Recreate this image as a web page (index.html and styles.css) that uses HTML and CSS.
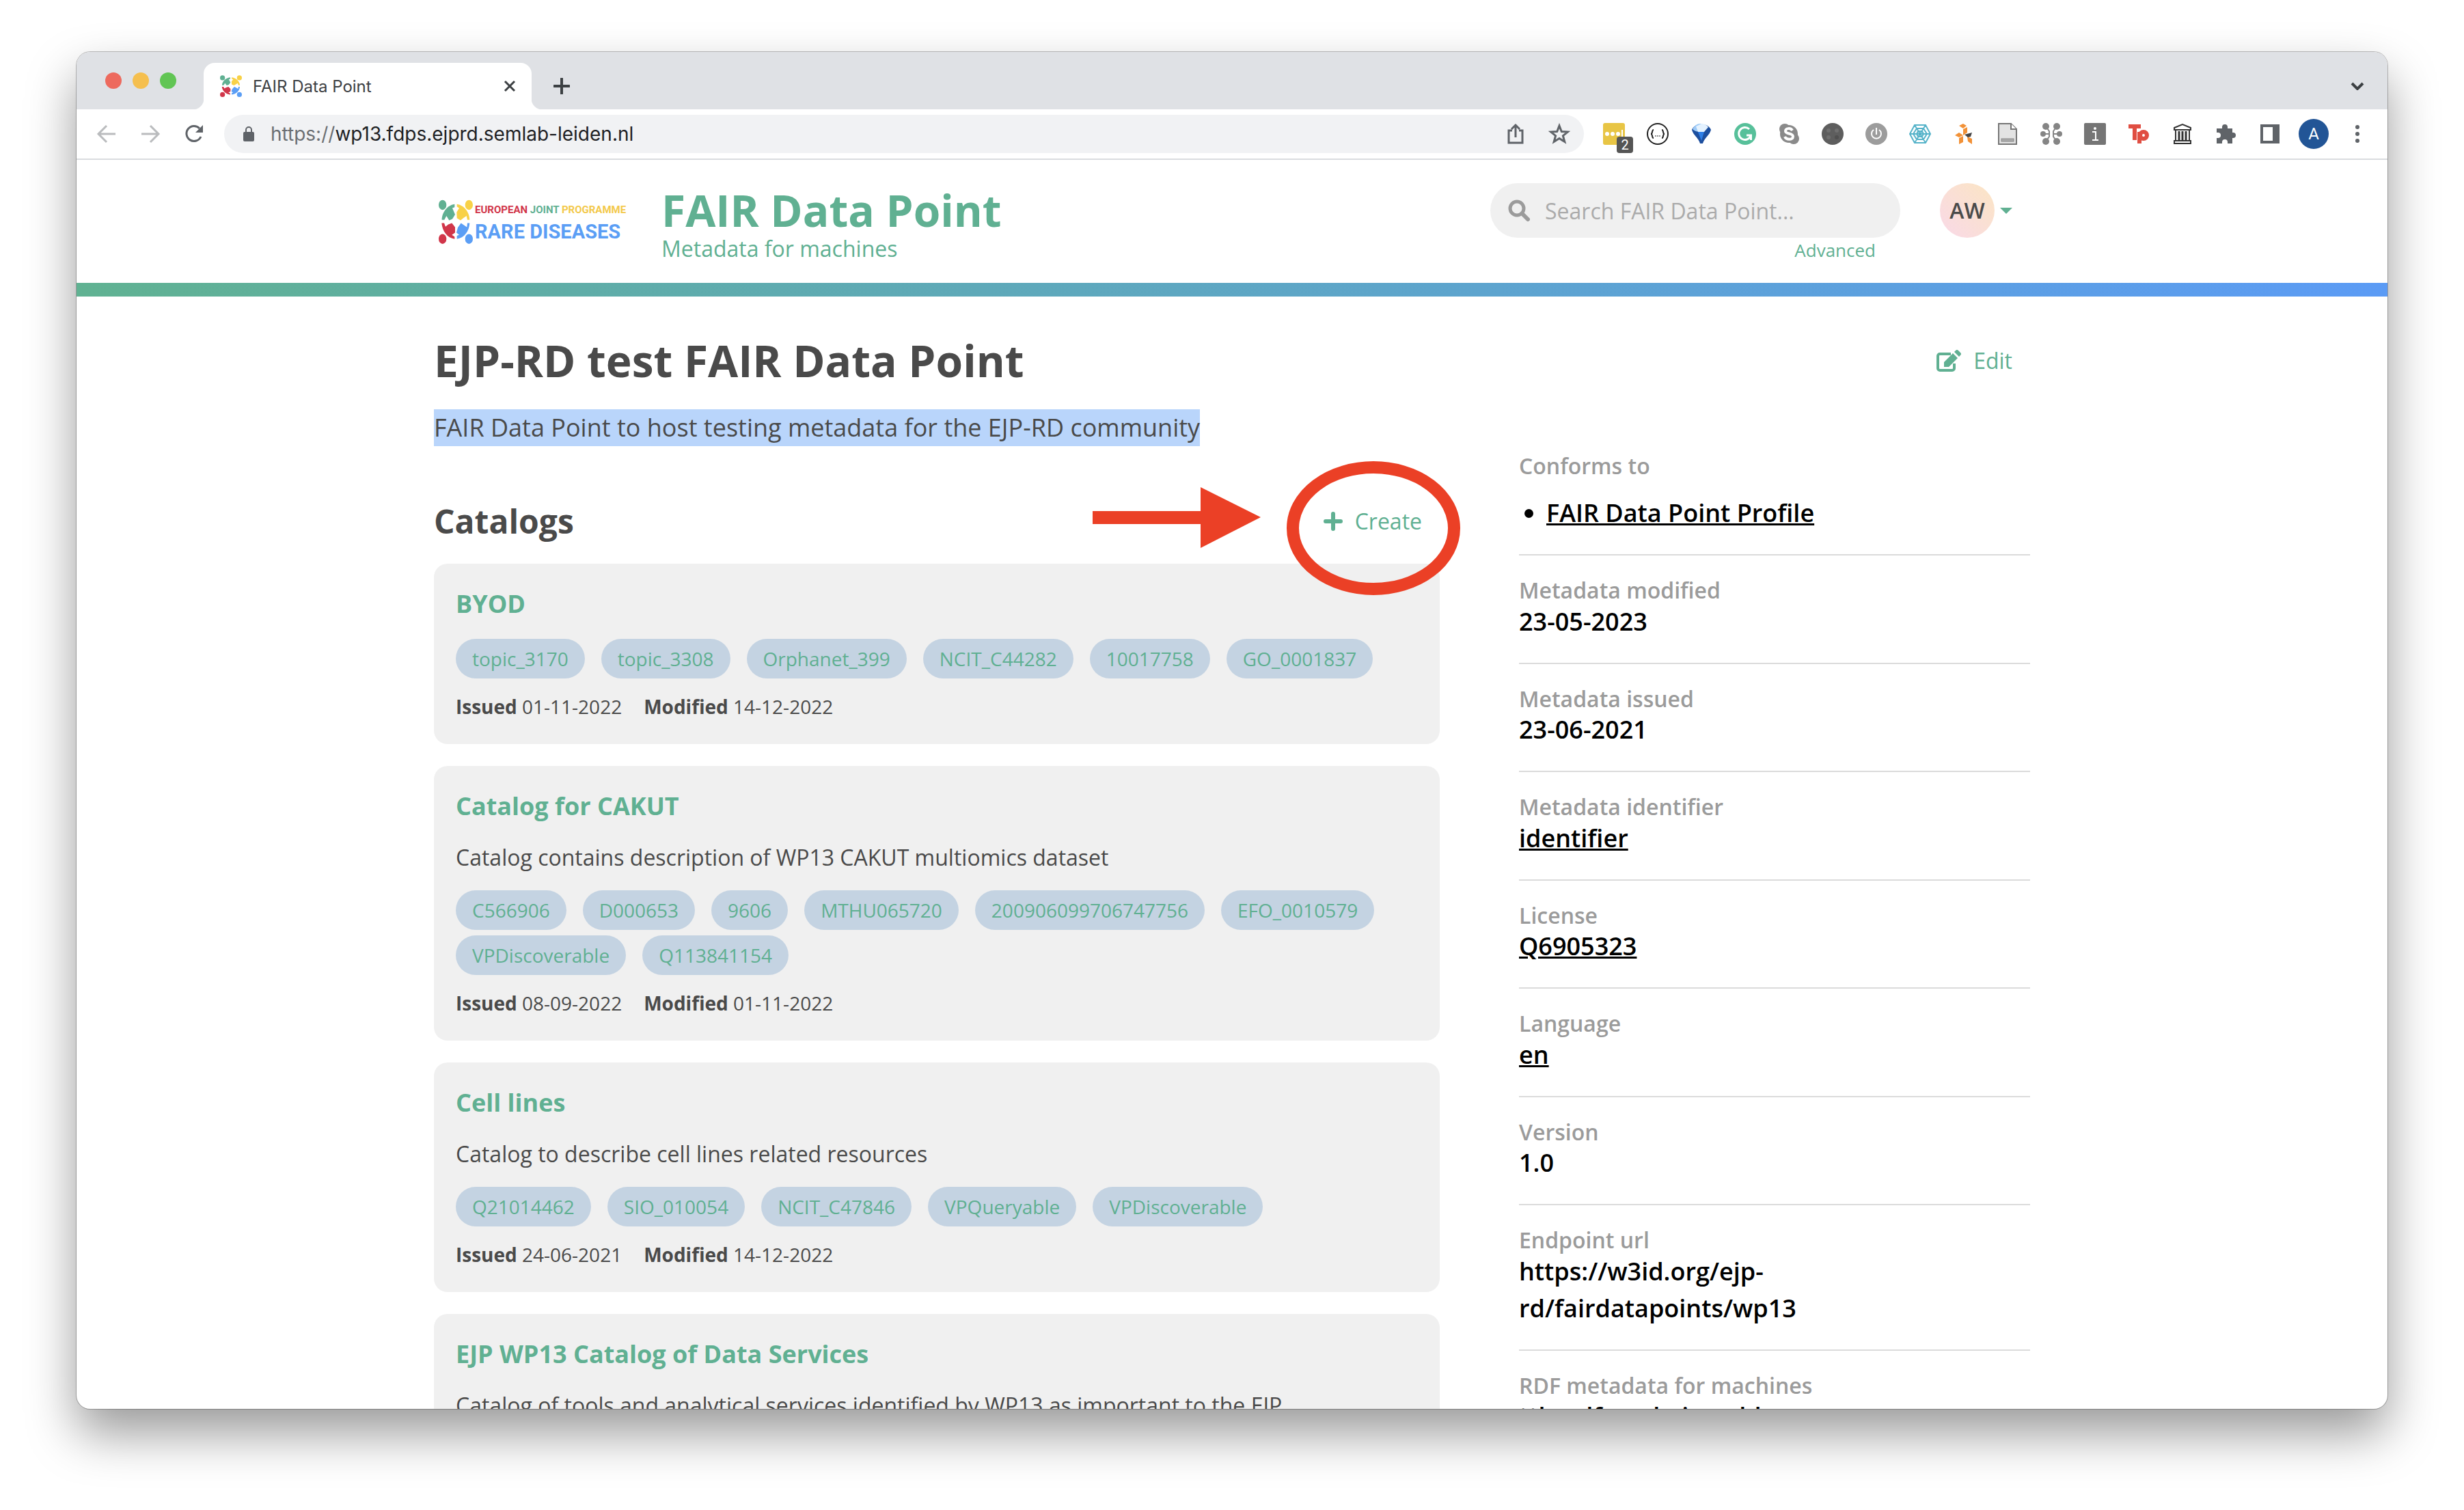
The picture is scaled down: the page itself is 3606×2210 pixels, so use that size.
FILE: index.html
```html
<!DOCTYPE html>
<html lang="en">
<head>
<meta charset="utf-8">
<title>FAIR Data Point</title>
<link rel="stylesheet" href="styles.css">
</head>
<body>
<svg class="defs" aria-hidden="true">
  <symbol id="mark" viewBox="0 0 150 196" preserveAspectRatio="none">
    <g fill="#60b092"><ellipse cx="17" cy="24" rx="17" ry="22"/><path d="M14 90C14 60 35 25 70 20V34L60 38 72 66 60 86 46 92 34 72 25 90Z"/></g>
    <g fill="#f8d147"><ellipse cx="133" cy="24" rx="17" ry="22"/><path d="M136 90C136 60 115 25 80 20V32L90 38 79 56 80 82 96 92 108 82 122 72 126 90Z"/></g>
    <g fill="#d1364a"><ellipse cx="17" cy="174" rx="17" ry="22"/><path d="M13 104C16 140 38 170 70 174V164L58 156 72 146V122L58 104 42 110 30 120 24 104Z"/></g>
    <g fill="#5b9ef5"><ellipse cx="133" cy="174" rx="17" ry="22"/><path d="M136 104C134 140 112 170 80 174V160L90 156 78 146 84 124 98 104 112 114 124 122 126 104Z"/></g>
  </symbol>
</svg>

<div class="window">
  <header class="tabstrip">
    <div class="lights"><span class="light red"></span><span class="light amber"></span><span class="light green"></span></div>
    <div class="tab">
      <svg class="favicon"><use href="#mark"/></svg>
      <span class="tab-title">FAIR Data Point</span>
      <button class="icon-btn tab-close" aria-label="Close tab"><svg width="18" height="18" viewBox="0 0 18 18"><path d="M2 2 16 16M16 2 2 16" stroke="#3c4043" stroke-width="3"/></svg></button>
    </div>
    <button class="icon-btn new-tab" aria-label="New tab"><svg width="24" height="24" viewBox="0 0 24 24"><path d="M12 1V23M1 12H23" stroke="#3c4043" stroke-width="4" stroke-linecap="round"/></svg></button>
    <button class="icon-btn tab-search" aria-label="Search tabs"><svg width="20" height="12" viewBox="0 0 20 12"><path d="M2 2 10 10 18 2" fill="none" stroke="#3c4043" stroke-width="4"/></svg></button>
  </header>

  <nav class="toolbar">
    <button class="icon-btn" aria-label="Back"><svg width="32" height="32" viewBox="0 0 32 32" fill="none" stroke="#babcbe" stroke-width="3"><path d="M29 16H5M16 4 4 16 16 28"/></svg></button>
    <button class="icon-btn" aria-label="Forward"><svg width="32" height="32" viewBox="0 0 32 32" fill="none" stroke="#babcbe" stroke-width="3"><path d="M3 16H27M16 4 28 16 16 28"/></svg></button>
    <button class="icon-btn" aria-label="Reload"><svg width="32" height="32" viewBox="0 0 32 32"><path d="M26 20A11 11 0 1 1 24 8" fill="none" stroke="#5f6368" stroke-width="3"/><path d="M29 3V14H18Z" fill="#5f6368"/></svg></button>
    <div class="omnibox">
      <svg width="16" height="22" viewBox="0 0 16 22"><rect y="8" width="16" height="14" rx="2" fill="#5f6368"/><path d="M4 9V5A4 4 0 0 1 12 5V9" fill="none" stroke="#5f6368" stroke-width="2"/></svg>
      <span class="url"><span class="scheme">https://</span>wp13.fdps.ejprd.semlab-leiden.nl</span>
      <button class="icon-btn" aria-label="Share"><svg width="32" height="32" viewBox="0 0 32 32" fill="none" stroke="#5f6368" stroke-width="3"><path d="M11 11H6V29H26V11H21M16 21V4M10 9 16 3 22 9"/></svg></button>
      <button class="icon-btn" aria-label="Bookmark"><svg width="32" height="32" viewBox="0 0 32 32"><path d="M16 4 19.300 12.500 28.500 13 21.400 18.700 23.800 27.500 16 22.500 8.200 27.500 10.600 18.700 3.500 13 12.700 12.500Z" fill="none" stroke="#5f6368" stroke-width="3"/></svg></button>
    </div>
    <div class="extensions">
      <button class="icon-btn" aria-label="Password manager"><svg width="32" height="32" viewBox="0 0 32 32"><rect width="32" height="32" rx="3" fill="#e8c545"/><g fill="#fff"><circle cx="6" cy="16" r="3"/><circle cx="14" cy="16" r="3"/><circle cx="22" cy="16" r="3"/><rect x="27" y="10" width="2" height="12"/></g></svg><span class="badge">2</span></button>
      <button class="icon-btn" aria-label="JSON viewer"><svg width="32" height="32" viewBox="0 0 32 32"><circle cx="16" cy="16" r="15" fill="#fff" stroke="#222" stroke-width="2"/><path d="M10 10C7 10 9 16 6 16 9 16 7 22 10 22M22 10C25 10 23 16 26 16 23 16 25 22 22 22" fill="none" stroke="#222" stroke-width="2"/><path d="M12 19H14M15 19H17M18 19H20" stroke="#222" stroke-width="1"/></svg></button>
      <button class="icon-btn" aria-label="Balloon"><svg width="32" height="32" viewBox="0 0 32 32"><path d="M2 10C6-1 26-1 30 10 28 18 20 22 18 30H14C12 22 4 18 2 10Z" fill="#1d4f9e"/><path d="M3 9C8 0 14 1 16 1V13C10 13 6 12 3 9Z" fill="#9dcaf7"/><path d="M16 1C20 1 24 3 26 6L20 13H11L8 5Z" fill="#e4f2ff"/><path d="M11 13H20L16 26Z" fill="#2f7fe6"/></svg></button>
      <button class="icon-btn" aria-label="Grammar"><svg width="32" height="32" viewBox="0 0 32 32"><circle cx="16" cy="16" r="16" fill="#57c09a"/><path d="M22 9A9 9 0 1 0 24 19M18 18H24.500V25" fill="none" stroke="#fff" stroke-width="3"/></svg></button>
      <button class="icon-btn" aria-label="Skype"><svg width="32" height="32" viewBox="0 0 32 32"><circle cx="16" cy="16" r="13" fill="#8a8a8a"/><circle cx="10" cy="9" r="8" fill="#8a8a8a"/><circle cx="23" cy="23" r="8" fill="#8a8a8a"/><path d="M21 11C19 7 11 7 11 12 11 17 22 14 22 20 22 25 12 25 10 20" fill="none" stroke="#fff" stroke-width="4"/></svg></button>
      <button class="icon-btn" aria-label="Colours"><svg width="32" height="32" viewBox="0 0 32 32"><circle cx="16" cy="16" r="16" fill="#5e5e5e"/><g fill="#707070"><circle cx="10" cy="11" r="3"/><circle cx="22" cy="11" r="3"/><circle cx="10" cy="21" r="3"/></g><circle cx="22" cy="21" r="3" fill="#505050"/></svg></button>
      <button class="icon-btn" aria-label="Power"><svg width="32" height="32" viewBox="0 0 32 32"><circle cx="16" cy="16" r="16" fill="#9c9c9c"/><path d="M12 10A7 7 0 1 0 20 10M16 7V17" fill="none" stroke="#fff" stroke-width="2"/></svg></button>
      <button class="icon-btn" aria-label="Web"><svg width="32" height="32" viewBox="0 0 32 32" fill="none" stroke="#56b3c9" stroke-width="2"><path d="M8 3H24L31 16 24 29H8L1 16ZM11 8H21L26 16 21 24H11L6 16ZM13 12H19L21 16 19 20H13L11 16ZM8 3 24 29M24 3 8 29M1 16H31"/></svg></button>
      <button class="icon-btn" aria-label="Blocks"><svg width="32" height="32" viewBox="0 0 32 32"><g fill="#f29137"><path d="M9 4 15 1 20 4 15 8ZM15 9 21 6V14L15 18ZM3 18 9 14 15 18 9 21ZM9 22 15 19V28L9 31ZM21 20 28 23V31L22 27Z"/></g><path d="M17 17 28 14 26 20 22 21Z" fill="#444"/></svg></button>
      <button class="icon-btn" aria-label="Document"><svg width="32" height="32" viewBox="0 0 32 32"><path d="M3 1H21L29 9V31H3Z" fill="#e3e3e3" stroke="#757575" stroke-width="2"/><path d="M21 1V9H29" fill="#fff" stroke="#757575" stroke-width="2"/><rect x="7" y="23" width="18" height="4" fill="#aaa" stroke="#888"/></svg></button>
      <button class="icon-btn" aria-label="Network"><svg width="32" height="32" viewBox="0 0 32 32"><path d="M8 5 13 12V20L8 27M24 5 19 12V20L24 27M4 16H13M19 16H28" fill="none" stroke="#858585" stroke-width="2"/><g fill="#858585"><circle cx="8" cy="5" r="5"/><circle cx="24" cy="5" r="5"/><circle cx="4" cy="16" r="4"/><circle cx="28" cy="16" r="4"/><circle cx="8" cy="27" r="5"/><circle cx="24" cy="27" r="5"/></g></svg></button>
      <button class="icon-btn" aria-label="Info"><svg width="32" height="32" viewBox="0 0 32 32"><rect width="32" height="32" rx="2" fill="#757575"/><circle cx="16" cy="8" r="2" fill="#fff"/><path d="M12 13H17V25M12 25H21" fill="none" stroke="#fff" stroke-width="2"/></svg></button>
      <button class="icon-btn" aria-label="Tp"><svg width="32" height="32" viewBox="0 0 32 32" fill="none" stroke="#e04e42" stroke-width="6"><path d="M1 5H19M10 5V25M17 30V13"/><circle cx="23" cy="18" r="5"/></svg></button>
      <button class="icon-btn" aria-label="Archive"><svg width="32" height="32" viewBox="0 0 32 32" fill="none" stroke="#333" stroke-width="2"><path d="M4 7 16 2 28 7V10H4ZM6 10V26H26V10M4 26H28V30H4Z"/><path d="M11 12V25M16 12V25M21 12V25" stroke-width="3"/></svg></button>
      <button class="icon-btn" aria-label="Extensions"><svg width="32" height="32" viewBox="0 0 32 32"><path d="M2 8H10V6A4 4 0 0 1 18 6V8H25V14H26A4 4 0 0 1 26 22H25V30H18V28A3 3 0 0 0 10 28V30H2V22H4A3 3 0 0 0 4 14H2Z" fill="#5f6368"/></svg></button>
      <button class="icon-btn" aria-label="Side panel"><svg width="32" height="32" viewBox="0 0 32 32"><path d="M2 2H30V30H2ZM6 6V26H20V6Z" fill="#5f6368" fill-rule="evenodd"/></svg></button>
      <button class="icon-btn" aria-label="Profile"><span class="profile">A</span></button>
      <button class="icon-btn" aria-label="Menu"><svg width="32" height="32" viewBox="0 0 32 32" fill="#5f6368"><circle cx="16" cy="6" r="3"/><circle cx="16" cy="16" r="3"/><circle cx="16" cy="26" r="3"/></svg></button>
    </div>
  </nav>

  <div class="viewport">
    <header class="site-header">
      <div class="container header-row">
        <a class="logo" href="#">
          <svg class="logo-mark"><use href="#mark"/></svg>
          <span class="logo-text">
            <span class="logo-top"><span class="c-red">EUROPEAN</span> <span class="c-green">JOINT</span> <span class="c-yellow">PROGRAMME</span></span>
            <span class="logo-bottom">RARE DISEASES</span>
          </span>
        </a>
        <div class="brand">
          <a class="brand-title" href="#">FAIR Data Point</a>
          <span class="brand-sub">Metadata for machines</span>
        </div>
        <form class="search">
          <div class="search-box">
            <svg width="32" height="32" viewBox="0 0 32 32" fill="none" stroke="#9b9b9b"><circle cx="13" cy="13" r="10" stroke-width="5"/><path d="M21 21 29 29" stroke-width="6" stroke-linecap="round"/></svg>
            <input type="text" aria-label="Search FAIR Data Point" placeholder="Search FAIR Data Point...">
          </div>
          <a class="advanced" href="#">Advanced</a>
        </form>
        <button class="user" aria-label="User menu"><span class="avatar">AW</span><span class="caret"></span></button>
      </div>
    </header>

    <main class="container page">
      <div class="title-row">
        <h1>EJP-RD test FAIR Data Point</h1>
        <a class="action" href="#"><svg width="36" height="32" viewBox="0 0 36 32"><path d="M21 6H5A3 3 0 0 0 2 9V27A3 3 0 0 0 5 30H23A3 3 0 0 0 26 27V20" fill="none" stroke="#60b092" stroke-width="4"/><path d="M11 25V18L24 5 31 12 18 25ZM26 3 28 1Q30-1 32 1L35 4Q37 6 35 8L33 10Z" fill="#60b092"/></svg>Edit</a>
      </div>
      <p class="subtitle">FAIR Data Point to host testing metadata for the EJP-RD community</p>

      <div class="columns">
        <section>
          <div class="section-head">
            <h2>Catalogs</h2>
            <a class="action" href="#"><svg width="28" height="28" viewBox="0 0 28 28"><path d="M14 3V25M3 14H25" stroke="#60b092" stroke-width="6" stroke-linecap="round"/></svg>Create</a>
            <svg class="annotation" width="539" height="196" viewBox="0 0 539 196" aria-hidden="true"><ellipse cx="411" cy="98" rx="118" ry="89" fill="none" stroke="#eb4026" stroke-width="18"/><path d="M0 73H158V38L246 82 158 127V92H0Z" fill="#eb4026"/></svg>
          </div>

          <article class="card">
            <h3><a href="#">BYOD</a></h3>
            <div class="chips"><a href="#">topic_3170</a><a href="#">topic_3308</a><a href="#">Orphanet_399</a><a href="#">NCIT_C44282</a><a href="#">10017758</a><a href="#">GO_0001837</a></div>
            <div class="dates"><span><b>Issued</b> 01-11-2022</span><span><b>Modified</b> 14-12-2022</span></div>
          </article>

          <article class="card">
            <h3><a href="#">Catalog for CAKUT</a></h3>
            <p>Catalog contains description of WP13 CAKUT multiomics dataset</p>
            <div class="chips"><a href="#">C566906</a><a href="#">D000653</a><a href="#">9606</a><a href="#">MTHU065720</a><a href="#">200906099706747756</a><a href="#">EFO_0010579</a><a href="#">VPDiscoverable</a><a href="#">Q113841154</a></div>
            <div class="dates"><span><b>Issued</b> 08-09-2022</span><span><b>Modified</b> 01-11-2022</span></div>
          </article>

          <article class="card">
            <h3><a href="#">Cell lines</a></h3>
            <p>Catalog to describe cell lines related resources</p>
            <div class="chips"><a href="#">Q21014462</a><a href="#">SIO_010054</a><a href="#">NCIT_C47846</a><a href="#">VPQueryable</a><a href="#">VPDiscoverable</a></div>
            <div class="dates"><span><b>Issued</b> 24-06-2021</span><span><b>Modified</b> 14-12-2022</span></div>
          </article>

          <article class="card">
            <h3><a href="#">EJP WP13 Catalog of Data Services</a></h3>
            <p>Catalog of tools and analytical services identified by WP13 as important to the EJP</p>
          </article>
        </section>

        <aside>
          <dl class="meta">
            <div><dt>Conforms to</dt><dd><ul><li><a href="#">FAIR Data Point Profile</a></li></ul></dd></div>
            <div><dt>Metadata modified</dt><dd>23-05-2023</dd></div>
            <div><dt>Metadata issued</dt><dd>23-06-2021</dd></div>
            <div><dt>Metadata identifier</dt><dd><a href="#">identifier</a></dd></div>
            <div><dt>License</dt><dd><a href="#">Q6905323</a></dd></div>
            <div><dt>Language</dt><dd><a href="#">en</a></dd></div>
            <div><dt>Version</dt><dd>1.0</dd></div>
            <div><dt>Endpoint url</dt><dd>https://w3id.org/ejp-<br>rd/fairdatapoints/wp13</dd></div>
            <div><dt>RDF metadata for machines</dt><dd class="formats"><a href="#">ttl</a><a href="#">rdf+xml</a><a href="#">json-ld</a></dd></div>
          </dl>
        </aside>
      </div>
    </main>
  </div>
</div>
</body>
</html>
```
FILE: styles.css
```css
* { box-sizing: border-box; }

body {
  margin: 0;
  height: 100vh;
  padding: 76px 112px 148px;
  overflow: hidden;
  background: #fff;
  color: #4a4a4a;
  font-family: "Open Sans", sans-serif;
  font-size: 32px;
}

h1, h2, h3, p, dl, dd, ul { margin: 0; }
a { color: #60b092; text-decoration: none; }
svg { display: block; flex: none; }
.defs { position: absolute; width: 0; height: 0; }

/* Browser window */
.window {
  display: flex;
  flex-direction: column;
  height: 100%;
  overflow: hidden;
  border-radius: 20px;
  background: #fff;
  box-shadow: 0 0 0 1px rgba(0, 0, 0, .25), 0 36px 72px rgba(0, 0, 0, .4);
}

.icon-btn {
  display: flex;
  align-items: center;
  justify-content: center;
  width: 32px;
  height: 32px;
  flex: none;
  padding: 0;
  border: 0;
  background: none;
  position: relative;
}

.tabstrip {
  display: flex;
  align-items: flex-end;
  flex: none;
  height: 84px;
  padding: 0 28px 0 42px;
  background: #dfe1e5;
  font-family: Inter, Roboto, sans-serif;
}
.lights { display: flex; gap: 16px; margin-right: 40px; height: 84px; align-items: center; }
.light { width: 24px; height: 24px; border-radius: 50%; }
.red { background: #ed6a5e; }
.amber { background: #f5bf4f; }
.green { background: #61c554; }
.tab {
  position: relative;
  display: flex;
  align-items: center;
  width: 480px;
  height: 68px;
  padding: 0 16px 0 24px;
  border-radius: 16px 16px 0 0;
  background: #fff;
}
.tab::before, .tab::after {
  content: "";
  position: absolute;
  bottom: 0;
  width: 16px;
  height: 16px;
}
.tab::before { right: 100%; background: radial-gradient(circle at 0 0, #dfe1e5 16px, #fff 17px); }
.tab::after { left: 100%; background: radial-gradient(circle at 100% 0, #dfe1e5 16px, #fff 17px); }
.favicon { width: 32px; height: 32px; margin-right: 16px; }
.tab-title { flex: 1; font-size: 24px; color: #3c4043; }
.new-tab { margin: 0 auto 18px 28px; }
.tab-search { align-self: center; margin-top: 16px; }

.toolbar {
  display: flex;
  align-items: center;
  flex: none;
  gap: 32px;
  height: 74px;
  padding: 0 28px;
  border-bottom: 2px solid #dadcdf;
}
.omnibox {
  display: flex;
  align-items: center;
  flex: 1;
  gap: 32px;
  height: 56px;
  margin-left: -4px;
  margin-right: -4px;
  padding: 0 20px 0 28px;
  border-radius: 28px;
  background: #f1f2f4;
  font-family: Inter, Roboto, sans-serif;
}
.url { flex: 1; margin-left: -8px; font-size: 28px; color: #202124; }
.scheme { color: #6b6f73; }
.extensions { display: flex; gap: 32px; }
.badge {
  position: absolute;
  left: 20px;
  top: 20px;
  width: 24px;
  height: 24px;
  border-radius: 4px;
  background: #555;
  color: #fff;
  font: 20px/24px Roboto, sans-serif;
  text-align: center;
}
.profile {
  flex: none;
  width: 44px;
  height: 44px;
  border-radius: 50%;
  background: #225596;
  color: #fff;
  font: 24px/44px Roboto, sans-serif;
  text-align: center;
}

/* Site header */
.viewport { flex: 1; min-height: 0; overflow: hidden; }
.container { width: 100%; max-width: 2336px; margin: 0 auto; }
.site-header { border-bottom: 20px solid; border-image: linear-gradient(to right, #60b292, #5b9bf5) 1; }
.header-row { display: flex; align-items: flex-start; height: 180px; padding: 34px 26px 0 7px; }
.logo { display: flex; width: 270px; margin: 24px 56px 0 0; }
.logo-mark { width: 50px; height: 65px; margin-right: 3px; }
.logo-text { display: flex; flex-direction: column; font-family: Roboto, sans-serif; font-weight: bold; white-space: nowrap; }
.logo-top { font-size: 15px; line-height: 30px; }
.logo-bottom { font-size: 29px; line-height: 34px; color: #5b9ef5; }
.c-red { color: #d1364a; }
.c-green { color: #60b092; }
.c-yellow { color: #f3c94b; }
.brand { display: flex; flex-direction: column; padding-top: 8px; color: #60b092; }
.brand-title { font-size: 64px; line-height: 64px; font-weight: 700; }
.brand-sub { line-height: 48px; }
.search { display: flex; flex-direction: column; width: 600px; margin-left: auto; }
.search-box { display: flex; align-items: center; gap: 22px; height: 80px; padding: 0 26px; border-radius: 40px; background: #f0f0f0; }
.search-box input { flex: 1; min-width: 0; padding: 0; border: 0; outline: 0; background: none; font: inherit; color: #4a4a4a; }
.search-box input::placeholder { color: #ababab; opacity: 1; }
.advanced { align-self: flex-end; padding-right: 36px; font-size: 26px; line-height: 36px; }
.user { display: flex; align-items: center; gap: 8px; margin-left: 58px; padding: 0; border: 0; background: none; font: inherit; }
.avatar { width: 80px; border-radius: 50%; background: linear-gradient(45deg, #f9d9e8, #fbe5c3); color: #4a4a4a; font-weight: 600; line-height: 80px; text-align: center; }
.caret { border: 9px solid transparent; border-top-color: #60b092; border-bottom: 0; }

/* Page */
.page { padding-top: 48px; }
.title-row { display: flex; align-items: center; justify-content: space-between; padding-right: 26px; }
h1 { font-size: 64px; line-height: 92px; }
.action { display: flex; align-items: center; gap: 18px; line-height: 48px; }
.subtitle { width: fit-content; margin-top: 25px; background: #b9d5fb; font-size: 36px; line-height: 54px; }
.columns { display: grid; grid-template-columns: 1472fr 748fr; gap: 116px; }
.section-head { position: relative; display: flex; align-items: center; justify-content: space-between; margin: 74px 0 26px; padding-right: 26px; }
h2 { font-size: 48px; line-height: 72px; }
.annotation { position: absolute; top: -52px; right: -31px; pointer-events: none; }

.card { margin-bottom: 32px; padding: 32px 32px 34px; border-radius: 20px; background: #f0f0f0; }
.card h3 { margin-bottom: 24px; font-size: 36px; line-height: 54px; }
.card p { margin-bottom: 24px; line-height: 48px; }
.chips { display: flex; flex-wrap: wrap; gap: 8px 24px; margin-bottom: 20px; }
.chips a { padding: 0 24px; border-radius: 29px; background: #c4d3e2; font-size: 28px; line-height: 58px; }
.dates { display: flex; gap: 32px; font-size: 28px; line-height: 42px; }

.meta { padding-top: 11px; font-weight: 600; }
.meta > div + div { margin-top: 33px; padding-top: 33px; border-top: 2px solid #dbdbdb; }
.meta dt { color: #9b9b9b; line-height: 1.14; }
.meta dd { color: #000; font-size: 36px; line-height: 54px; }
.meta dd a { color: #000; text-decoration: underline; }
.meta ul { margin-top: 24px; padding-left: 40px; }
.meta .formats { display: flex; gap: 32px; }
.meta .formats a { text-decoration: none; }
```
